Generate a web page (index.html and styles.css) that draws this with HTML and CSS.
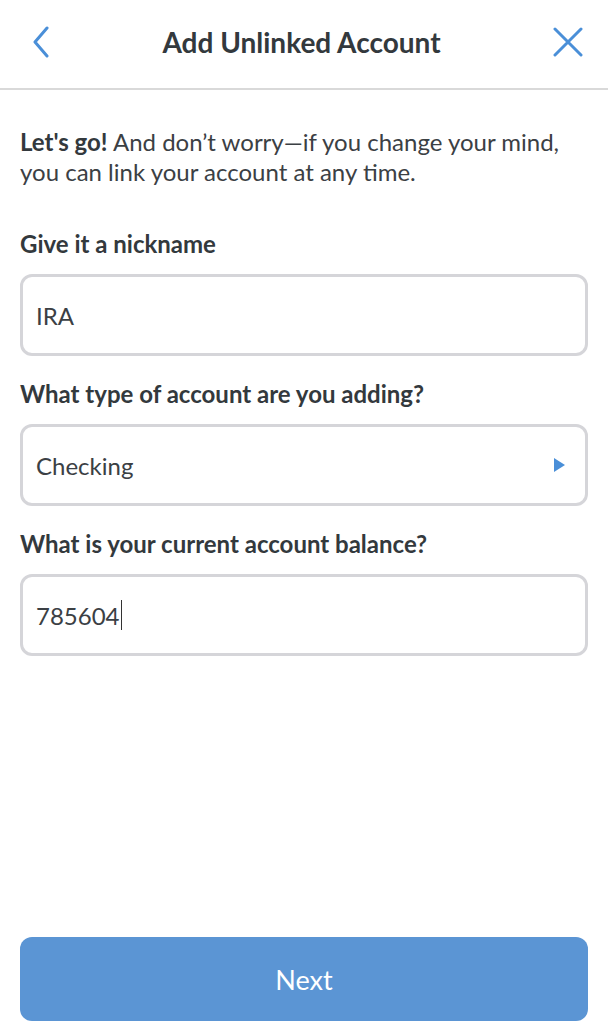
FILE: index.html
```html
<!DOCTYPE html>
<html lang="en">
<head>
<meta charset="utf-8">
<title>Add Unlinked Account</title>
<link rel="stylesheet" href="styles.css">
</head>
<body>
<div class="page">
  <header class="topbar">
    <button class="icon-btn back" aria-label="Back">
      <svg width="18" height="32" viewBox="0 0 18 32"><path d="M15 2 L3 16 L15 30" fill="none" stroke="#4a8fd8" stroke-width="3" stroke-linecap="round" stroke-linejoin="round"/></svg>
    </button>
    <h1 class="title">Add Unlinked Account</h1>
    <button class="icon-btn close" aria-label="Close">
      <svg width="30" height="30" viewBox="0 0 30 30"><path d="M2 2 L28 28 M28 2 L2 28" fill="none" stroke="#4a8fd8" stroke-width="3" stroke-linecap="round"/></svg>
    </button>
  </header>
  <main class="content">
    <p class="intro"><strong>Let's go!</strong> And don’t worry—if you change your mind, you can link your account at any time.</p>
    <div class="field">
      <label class="label">Give it a nickname</label>
      <div class="box">IRA</div>
    </div>
    <div class="field">
      <label class="label">What type of account are you adding?</label>
      <div class="box select"><span>Checking</span><span class="tri"></span></div>
    </div>
    <div class="field">
      <label class="label">What is your current account balance?</label>
      <div class="box">785604<span class="caret"></span></div>
    </div>
  </main>
  <div class="footer">
    <button class="next">Next</button>
  </div>
</div>
</body>
</html>
```
FILE: styles.css
```css
* { box-sizing: border-box; }
html, body { margin: 0; padding: 0; background: #fff; }
body {
  font-family: Lato, "Open Sans", "Liberation Sans", sans-serif;
  color: #3b4044;
}
.page {
  height: 1024px;
  display: flex;
  flex-direction: column;
}
.topbar {
  height: 90px;
  border-bottom: 2px solid #d9d9d9;
  display: flex;
  align-items: center;
  justify-content: space-between;
  padding: 0 24px 4px 31px;
}
.icon-btn {
  background: none;
  border: 0;
  padding: 0;
  display: flex;
  align-items: center;
  justify-content: center;
}
.icon-btn.back { width: 20px; height: 34px; }
.icon-btn.close { width: 32px; height: 32px; }
.title {
  margin: 0;
  font-size: 28px;
  font-weight: 700;
  color: #33393d;
  letter-spacing: 0;
}
.content {
  flex: 1;
  padding: 37px 20px 0;
  display: flex;
  flex-direction: column;
}
.intro {
  margin: 0 0 42px;
  font-size: 24px;
  line-height: 30px;
}
.intro strong { font-weight: 700; color: #33393d; }
.field {
  display: flex;
  flex-direction: column;
  gap: 15px;
  margin-bottom: 23px;
}
.label {
  font-size: 24px;
  line-height: 30px;
  font-weight: 700;
  color: #33393d;
}
.box {
  height: 82px;
  border: 3px solid #d5d5d9;
  border-radius: 12px;
  display: flex;
  align-items: center;
  padding: 0 13px;
  font-size: 24px;
  color: #3b4044;
}
.select { justify-content: space-between; padding-right: 20px; }
.tri {
  width: 0;
  height: 0;
  border-top: 7.5px solid transparent;
  border-bottom: 7.5px solid transparent;
  border-left: 11px solid #4a8fd8;
}
.caret {
  display: inline-block;
  width: 1.5px;
  height: 30px;
  background: #333;
  margin-left: 1px;
}
.footer {
  padding: 0 20px 3px;
}
.next {
  width: 100%;
  height: 84px;
  border: 0;
  border-radius: 12px;
  background: #5b95d4;
  color: #fff;
  font-family: Lato, "Open Sans", "Liberation Sans", sans-serif;
  font-size: 27px;
  font-weight: 400;
}
```
